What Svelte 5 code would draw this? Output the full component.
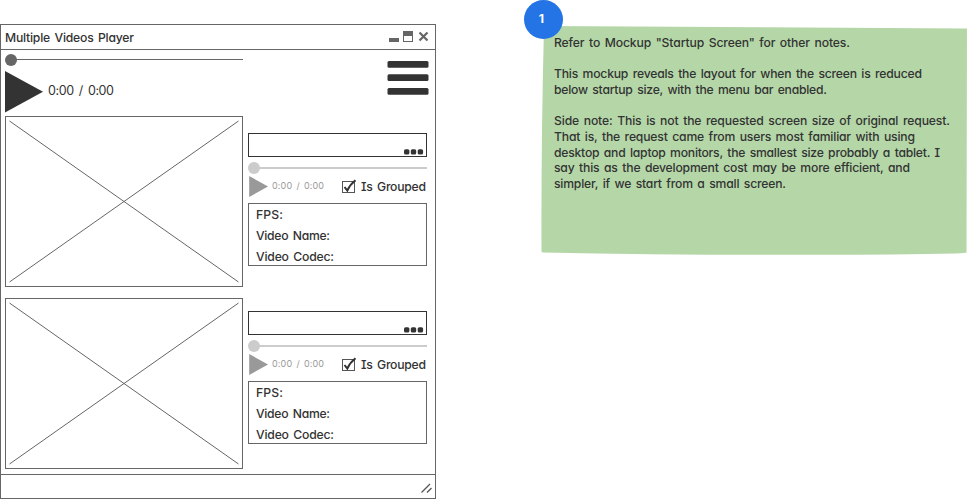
<script>
  const groups = [
    { offset: 17, gap: 0 },
    { offset: 13, gap: 11 }
  ];
  const details = [
    { text: 'FPS:', width: 27 },
    { text: 'Video Name:', width: 74 },
    { text: 'Video Codec:', width: 78 }
  ];
  const note = [
    { text: 'Refer to Mockup "Startup Screen" for other notes.', width: 296 },
    { text: '', width: 0 },
    { text: 'This mockup reveals the layout for when the screen is reduced', width: 368 },
    { text: 'below startup size, with the menu bar enabled.', width: 273 },
    { text: '', width: 0 },
    { text: 'Side note: This is not the requested screen size of original request.', width: 396 },
    { text: 'That is, the request came from users most familiar with using', width: 361 },
    { text: 'desktop and laptop monitors, the smallest size probably a tablet. I', width: 386 },
    { text: 'say this as the development cost may be more efficient, and', width: 356 },
    { text: 'simpler, if we start from a small screen.', width: 232 }
  ];

  // Tracks a line of text out to its set measure.
  function fit(node, width) {
    const natural = node.getBoundingClientRect().width;
    const count = node.textContent.length;
    if (count > 1) node.style.letterSpacing = `${(width - natural) / (count - 1)}px`;
  }
</script>

<main>
  <section class="window">
    <header>
      <h1 use:fit={129}>Multiple Videos Player</h1>
      <svg class="controls" width="42" height="14" viewBox="0 0 42 14">
        <rect x="0" y="8" width="10" height="4" fill="#666" />
        <rect x="14.5" y="1.5" width="9" height="10" fill="#fff" stroke="#666" />
        <rect x="14" y="1" width="10" height="5" fill="#666" />
        <path d="M30.5 2.5 38.5 10.5 M38.5 2.5 30.5 10.5" stroke="#666" stroke-width="2.2" />
      </svg>
    </header>

    <div class="top">
      <div class="player">
        <svg class="slider" width="238" height="12" viewBox="0 0 238 12">
          <path d="M6 5.5H238" stroke="#666" />
          <circle cx="6" cy="6" r="6" fill="#666" />
        </svg>
        <div class="playline">
          <svg width="38" height="42" viewBox="0 0 38 42"><path d="M0 0 38 20.7 0 41.5Z" fill="#333" /></svg>
          <span class="time"><span use:fit={66}>0:00 / 0:00</span></span>
        </div>
      </div>
      <svg class="menu" width="42" height="36" viewBox="0 0 42 36">
        <rect x="0.5" y="1" width="41" height="6.8" rx="1.5" fill="#333" />
        <rect x="0.5" y="14.2" width="41" height="6.8" rx="1.5" fill="#333" />
        <rect x="0.5" y="28" width="41" height="6.8" rx="1.5" fill="#333" />
      </svg>
    </div>

    {#each groups as g}
      <div class="group" style:margin-top="{g.gap}px">
        <svg class="video" width="238" height="171" viewBox="0 0 238 171">
          <rect x="0.5" y="0.5" width="237" height="170" fill="#fff" stroke="#666" />
          <path d="M4.5 5 233.5 166 M233.5 5 4.5 166" stroke="#666" />
        </svg>
        <div class="side" style:padding-top="{g.offset}px">
          <div class="field">
            <svg width="20" height="6" viewBox="0 0 20 6">
              <rect x="0" y="0.2" width="5.4" height="5.4" rx="1.6" fill="#333" />
              <rect x="6.8" y="0.2" width="5.4" height="5.4" rx="1.6" fill="#333" />
              <rect x="13.7" y="0.2" width="5.4" height="5.4" rx="1.6" fill="#333" />
            </svg>
          </div>
          <svg class="minislider" width="179" height="12" viewBox="0 0 179 12">
            <rect x="6" y="5" width="173" height="2" fill="#ccc" />
            <circle cx="6" cy="6" r="6" fill="#ccc" />
          </svg>
          <div class="row">
            <svg width="20" height="21" viewBox="0 0 20 21"><path d="M1.2 0 20 10.5 1.2 21Z" fill="#999" /></svg>
            <span class="smalltime"><span use:fit={52}>0:00 / 0:00</span></span>
            <svg class="check" width="16" height="15" viewBox="0 0 16 15">
              <rect x="1.5" y="2.5" width="12" height="11" fill="#fff" stroke="#555" />
              <path d="M3.5 8 6.3 11.5Q9 5.5 14.5 1.2" fill="none" stroke="#333" stroke-width="2" />
            </svg>
            <span class="label"><span use:fit={65}>Is Grouped</span></span>
          </div>
          <div class="info">
            {#each details as d}
              <div><span use:fit={d.width}>{d.text}</span></div>
            {/each}
          </div>
        </div>
      </div>
    {/each}

    <footer>
      <svg width="11" height="10" viewBox="0 0 11 10"><path d="M0.5 9.5 9 1 M6 9.5 10.5 5" stroke="#555" stroke-width="1.3" /></svg>
    </footer>
  </section>

  <aside>
    <svg class="paper" width="427" height="230" viewBox="0 0 427 230">
      <path d="M3 0 180 1 426 2.5 425.5 226.5Q426 227 414 227.6 350 229 250 228.8 120 229 2 226.5L.5 226Q0 120 3 0Z" fill="#b5d7a8" />
    </svg>
    <div class="badge">1</div>
    <div class="text">
      {#each note as line}
        <p><span use:fit={line.width}>{line.text}</span></p>
      {/each}
    </div>
  </aside>
</main>

<style>
  :global(body) { margin: 0; background: #fff; }
  main {
    display: flex;
    width: 969px;
    height: 499px;
    overflow: hidden;
    box-sizing: border-box;
    font: 500 12.2px/16px Inter, "Noto Sans", sans-serif;
    font-feature-settings: "cv11", "cv08";
    word-spacing: 1.5px;
    color: #333;
  }
  svg { display: block; flex: none; }
  span, h1 { white-space: pre; }
  .window {
    display: flex;
    flex-direction: column;
    box-sizing: border-box;
    width: 436px;
    height: 475px;
    margin-top: 24px;
    border: 1px solid #666;
  }
  header {
    display: flex;
    align-items: center;
    justify-content: space-between;
    box-sizing: border-box;
    height: 25px;
    padding: 0 4px;
    border-bottom: 1px solid #666;
  }
  h1 { margin: 0; padding-top: 2px; font-size: inherit; font-weight: 500; }
  .top {
    display: flex;
    justify-content: space-between;
    height: 66px;
    padding: 0 6px 0 4px;
  }
  .player { padding-top: 4px; }
  .playline { display: flex; align-items: center; margin-top: 5px; }
  .time { margin: -2px 0 0 5px; font-size: 12.5px; font-weight: 400; word-spacing: 2px; }
  .menu { margin-top: 10px; }
  .group { display: flex; padding-left: 4px; height: 171px; }
  .side { width: 179px; margin-left: 5px; box-sizing: border-box; }
  .field {
    display: flex;
    align-items: flex-end;
    justify-content: flex-end;
    box-sizing: border-box;
    height: 24px;
    padding: 0 2px 1px 0;
    border: 1px solid #333;
  }
  .minislider { margin-top: 5px; }
  .row { display: flex; align-items: center; height: 21px; margin-top: 2px; }
  .smalltime { width: 52px; margin-left: 4px; font-size: 9px; font-weight: 400; line-height: 20px; color: #999; margin-top: -2px; }
  .check { margin-left: 17px; }
  .label { margin-left: 4px; }
  .info {
    box-sizing: border-box;
    height: 63px;
    margin-top: 6px;
    padding-left: 7px;
    border: 1px solid #666;
    line-height: 21px;
  }
  footer {
    display: flex;
    align-items: flex-end;
    justify-content: flex-end;
    box-sizing: border-box;
    flex: 1;
    margin-top: 5px;
    padding: 0 3px 5px 0;
    border-top: 1px solid #666;
  }
  aside { position: relative; width: 427px; height: 230px; margin: 26px 0 0 105px; }
  .paper { position: absolute; inset: 0; }
  .badge {
    position: absolute;
    left: -17px;
    top: -26px;
    width: 39px;
    height: 39px;
    padding-right: 4px;
    box-sizing: border-box;
    border-radius: 50%;
    background: #2474e5;
    color: #fff;
    font-weight: 700;
    line-height: 37px;
    text-align: center;
  }
  .text { position: relative; padding: 9px 0 0 13px; line-height: 15.67px; }
  p { height: 15.67px; margin: 0; }
</style>
